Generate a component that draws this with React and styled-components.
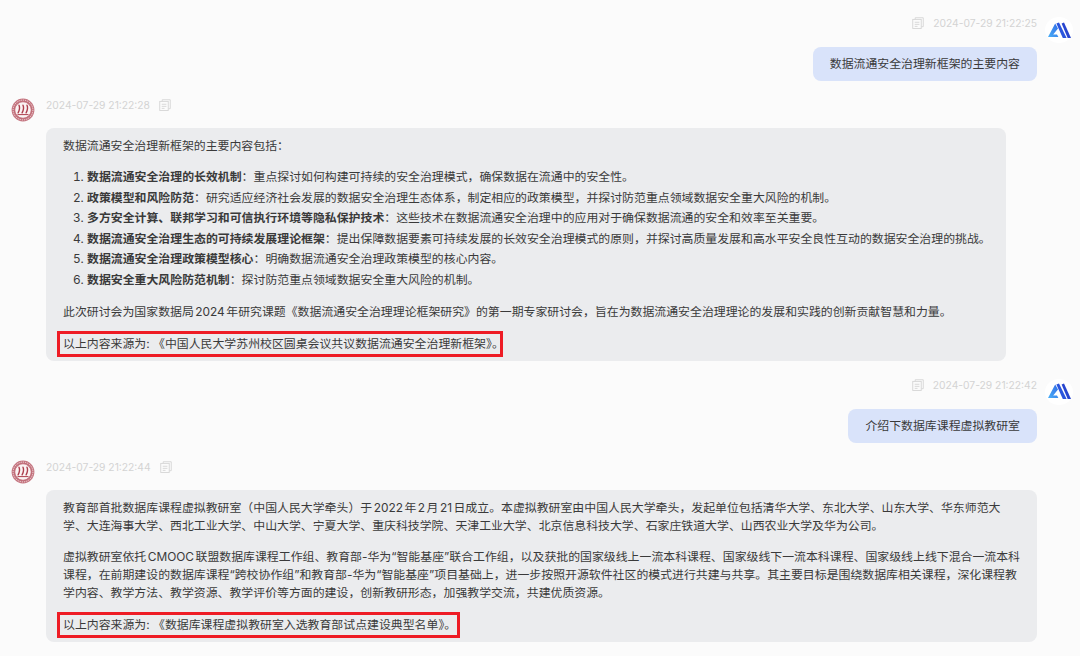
import React from "react";
import styled, { createGlobalStyle } from "styled-components";

const Global = createGlobalStyle`
  html, body { margin: 0; padding: 0; background: #fbfbfb; }
  body {
    width: 1080px;
    height: 656px;
    overflow: hidden;
    font-family: Inter, "Noto Sans CJK SC", sans-serif;
    text-autospace: normal;
  }
  ol, p { margin: 0; padding: 0; }
`;

const Chat = styled.div`
  display: flex;
  flex-direction: column;
  padding-top: 16px;
`;

const UserBlock = styled.div`
  display: flex;
  flex-direction: column;
  align-items: flex-end;
  padding-right: 43px;
  margin-bottom: ${(p) => p.$gap}px;
`;

const Meta = styled.div`
  display: flex;
  align-items: center;
  gap: 9px;
  height: 14px;
  font-size: 10.3px;
  color: #d3d3d3;
`;

const UserMeta = styled(Meta)`
  position: relative;
  margin-bottom: 17px;
`;

const UserAvatar = styled.div`
  position: absolute;
  right: -36px;
  top: 1px;
  width: 28px;
  height: 26px;
  border-radius: 50%;
  background: #fff;
  display: flex;
  align-items: center;
  justify-content: center;
`;

const UserBubble = styled.div`
  background: #d9e3fa;
  border-radius: 8px;
  padding: 7px 17px;
  font-size: 11.9px;
  line-height: 20px;
  color: #3a3a3a;
`;

const BotBlock = styled.div`
  display: grid;
  grid-template-columns: 46px 1fr;
  margin-bottom: ${(p) => p.$gap}px;
`;

const BotAvatarCell = styled.div`
  display: flex;
  justify-content: flex-end;
  padding-right: 11px;
`;

const BotMeta = styled(Meta)`
  margin-bottom: 16px;
`;

const BotBubble = styled.div`
  box-sizing: border-box;
  width: ${(p) => p.$width}px;
  background: #ebecee;
  border-radius: 8px;
  padding: 9px ${(p) => p.$padRight}px 4px 17px;
  font-size: 11.9px;
  line-height: 18px;
  color: #3a3a3a;
`;

const Para = styled.p`
  margin-bottom: 13px;
`;

const List = styled.ol`
  list-style: decimal;
  padding-left: 24px;
  margin-bottom: 14px;
`;

const Item = styled.li`
  margin-bottom: 2.6px;
  &:last-child {
    margin-bottom: 0;
  }
`;

const Source = styled.p`
  box-sizing: border-box;
  width: ${(p) => p.$width}px;
  white-space: nowrap;
  line-height: 20px;
  margin: -3px 0 0 -6px;
  padding: 0 0 0 3px;
  border: 3px solid #ee1c25;
`;

const CopyIcon = () => (
  <svg width="12" height="12" viewBox="0 0 13 13" fill="none" stroke="#d6d6d6" strokeWidth="1">
    <path d="M3.5 2.5V.8h8.7v9.7h-2" />
    <rect x=".8" y="2.6" width="9.2" height="9.8" />
    <path d="M3 5.7h5M3 8h5M3 10.2h3" />
  </svg>
);

const UserLogo = () => (
  <svg width="23" height="17" viewBox="0 0 23 17">
    <defs>
      <linearGradient id="lg" x1="0" y1="1" x2="1" y2="0">
        <stop offset="0" stopColor="#4cb0f7" />
        <stop offset="1" stopColor="#2f6ae6" />
      </linearGradient>
    </defs>
    <path d="M0 15 7.2 1.5 10 6.5 5.2 12.6H9L10.4 15z" fill="url(#lg)" />
    <path d="M8.4 1.6 11 .4 18.6 16h-3.8z" fill="#2a55dd" />
    <path d="M13.6 1.6 16 .4 23 16h-3.3z" fill="#2745cf" />
  </svg>
);

const BotLogo = () => (
  <svg width="24" height="24" viewBox="0 0 24 24" fill="none">
    <circle cx="12" cy="12" r="11.4" fill="#c4747f" />
    <circle cx="12" cy="12" r="9.9" stroke="#f3dfe1" strokeWidth="1" strokeDasharray="1.2 1" />
    <circle cx="12" cy="12" r="8.2" fill="#fbf3f3" stroke="#b4525f" strokeWidth="0.6" />
    <g stroke="#ae3f4e" strokeWidth="1.4" strokeLinecap="round">
      <path d="M8 7.2c.9 2 .7 4.6-.9 7.6" />
      <path d="M12 7.2c.9 2 .7 4.6-.9 7.6" />
      <path d="M16 7.2c.9 2 .7 4.6-.9 7.6" />
    </g>
    <path d="M6.5 16.6h11" stroke="#ae3f4e" strokeWidth="1" />
  </svg>
);

function UserMessage({ time, text, gap }) {
  return (
    <UserBlock $gap={gap}>
      <UserMeta>
        <CopyIcon />
        <span>{time}</span>
        <UserAvatar>
          <UserLogo />
        </UserAvatar>
      </UserMeta>
      <UserBubble>{text}</UserBubble>
    </UserBlock>
  );
}

function BotMessage({ time, children, gap, width, padRight }) {
  return (
    <BotBlock $gap={gap}>
      <BotAvatarCell>
        <BotLogo />
      </BotAvatarCell>
      <div>
        <BotMeta>
          <span>{time}</span>
          <CopyIcon />
        </BotMeta>
        <BotBubble $width={width} $padRight={padRight}>{children}</BotBubble>
      </div>
    </BotBlock>
  );
}

export default function App() {
  return (
    <Chat>
      <Global />
      <UserMessage time="2024-07-29 21:22:25" text="数据流通安全治理新框架的主要内容" gap={17} />
      <BotMessage time="2024-07-29 21:22:28" gap={17} width={960} padRight={4}>
        <Para>数据流通安全治理新框架的主要内容包括：</Para>
        <List>
          <Item><b>数据流通安全治理的长效机制</b>：重点探讨如何构建可持续的安全治理模式，确保数据在流通中的安全性。</Item>
          <Item><b>政策模型和风险防范</b>：研究适应经济社会发展的数据安全治理生态体系，制定相应的政策模型，并探讨防范重点领域数据安全重大风险的机制。</Item>
          <Item><b>多方安全计算、联邦学习和可信执行环境等隐私保护技术</b>：这些技术在数据流通安全治理中的应用对于确保数据流通的安全和效率至关重要。</Item>
          <Item><b>数据流通安全治理生态的可持续发展理论框架</b>：提出保障数据要素可持续发展的长效安全治理模式的原则，并探讨高质量发展和高水平安全良性互动的数据安全治理的挑战。</Item>
          <Item><b>数据流通安全治理政策模型核心</b>：明确数据流通安全治理政策模型的核心内容。</Item>
          <Item><b>数据安全重大风险防范机制</b>：探讨防范重点领域数据安全重大风险的机制。</Item>
        </List>
        <Para>此次研讨会为国家数据局2024年研究课题《数据流通安全治理理论框架研究》的第一期专家研讨会，旨在为数据流通安全治理理论的发展和实践的创新贡献智慧和力量。</Para>
        <Source $width={446}>以上内容来源为: 《中国人民大学苏州校区圆桌会议共议数据流通安全治理新框架》。</Source>
      </BotMessage>
      <UserMessage time="2024-07-29 21:22:42" text="介绍下数据库课程虚拟教研室" gap={17} />
      <BotMessage time="2024-07-29 21:22:44" gap={0} width={991} padRight={17}>
        <Para>教育部首批数据库课程虚拟教研室（中国人民大学牵头）于2022年2月21日成立。本虚拟教研室由中国人民大学牵头，发起单位包括清华大学、东北大学、山东大学、华东师范大学、大连海事大学、西北工业大学、中山大学、宁夏大学、重庆科技学院、天津工业大学、北京信息科技大学、石家庄铁道大学、山西农业大学及华为公司。</Para>
        <Para>虚拟教研室依托CMOOC联盟数据库课程工作组、教育部-华为“智能基座”联合工作组，以及获批的国家级线上一流本科课程、国家级线下一流本科课程、国家级线上线下混合一流本科课程，在前期建设的数据库课程“跨校协作组”和教育部-华为“智能基座”项目基础上，进一步按照开源软件社区的模式进行共建与共享。其主要目标是围绕数据库相关课程，深化课程教学内容、教学方法、教学资源、教学评价等方面的建设，创新教研形态，加强教学交流，共建优质资源。</Para>
        <Source $width={403}>以上内容来源为: 《数据库课程虚拟教研室入选教育部试点建设典型名单》。</Source>
      </BotMessage>
    </Chat>
  );
}
